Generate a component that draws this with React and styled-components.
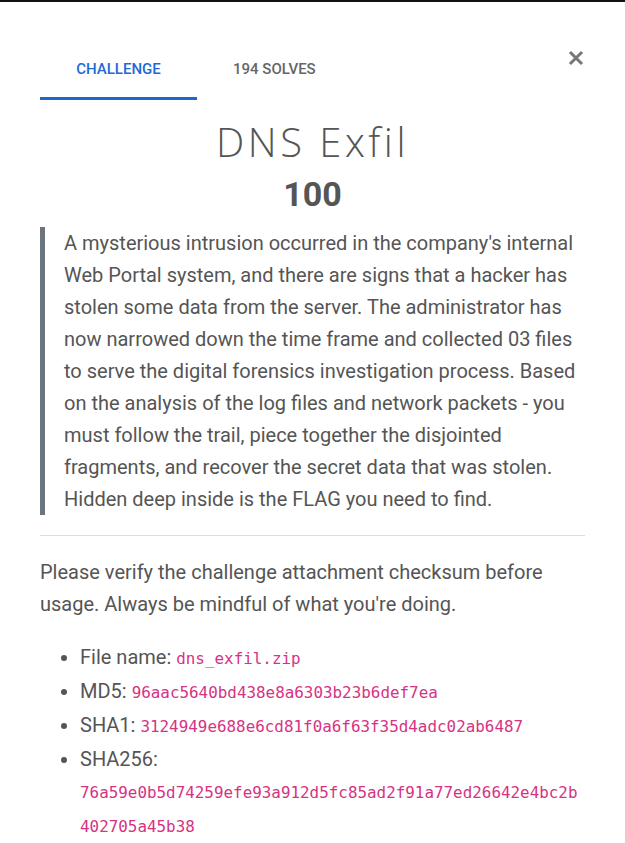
import styled, { createGlobalStyle } from "styled-components";

const GlobalStyle = createGlobalStyle`
  html, body {
    margin: 0;
    padding: 0;
    background: #fff;
  }
  body {
    font-family: Roboto, "Liberation Sans", sans-serif;
    color: #555;
  }
`;

const Modal = styled.div`
  border-top: 2px solid #111;
  padding: 36px 40px 20px;
  min-height: 843px;
  box-sizing: border-box;
`;

const Header = styled.div`
  display: flex;
  align-items: flex-start;
  justify-content: space-between;
`;

const Tabs = styled.nav`
  display: flex;
`;

const Tab = styled.div`
  width: ${(p) => (p.$active ? "157px" : "auto")};
  padding: 22px 36px 0;
  height: 62px;
  box-sizing: border-box;
  text-align: center;
  font-size: 15px;
  font-weight: 500;
  text-transform: uppercase;
  color: ${(p) => (p.$active ? "#1d6ad4" : "#666")};
  border-bottom: 3px solid ${(p) => (p.$active ? "#2067cc" : "transparent")};
`;

const Close = styled.button`
  background: none;
  border: none;
  padding: 0;
  margin: 12px 1px 0 0;
  color: #777;
  cursor: pointer;
  display: flex;
`;

const Title = styled.h2`
  margin: 18px 0 0;
  text-align: center;
  font-family: "Open Sans", sans-serif;
  font-weight: 300;
  font-size: 40px;
  letter-spacing: 3.5px;
  color: #555;
  line-height: 48px;
`;

const Points = styled.h3`
  margin: 3px 0 0;
  text-align: center;
  font-size: 34px;
  font-weight: 700;
  line-height: 50px;
  color: #555;
`;

const Quote = styled.blockquote`
  margin: 8px 0 0;
  padding: 0 0 0 19px;
  border-left: 5px solid #6c757d;
  font-size: 20px;
  line-height: 32px;
  color: #555;
`;

const Divider = styled.hr`
  border: none;
  border-top: 1px solid #ddd;
  margin: 20px 0 20px;
`;

const Note = styled.p`
  margin: 0 0 21px;
  font-size: 20px;
  line-height: 32px;
`;

const Files = styled.ul`
  margin: 0;
  padding-left: 40px;
  font-size: 20px;
  line-height: 32px;
`;

const Code = styled.code`
  font-family: "DejaVu Sans Mono", monospace;
  font-size: 15.9px;
  color: #d63384;
  overflow-wrap: break-word;
`;

const CloseIcon = () => (
  <svg width="16" height="16" viewBox="0 0 16 16">
    <path d="M3 3L13 13M13 3L3 13" stroke="currentColor" strokeWidth="3" strokeLinecap="square" />
  </svg>
);

const App = () => (
  <>
    <GlobalStyle />
    <Modal>
      <Header>
        <Tabs>
          <Tab $active>Challenge</Tab>
          <Tab>194 Solves</Tab>
        </Tabs>
        <Close aria-label="Close">
          <CloseIcon />
        </Close>
      </Header>
      <Title>DNS Exfil</Title>
      <Points>100</Points>
      <Quote>
        A mysterious intrusion occurred in the company's internal Web Portal system, and there are
        signs that a hacker has stolen some data from the server. The administrator has now
        narrowed down the time frame and collected 03 files to serve the digital forensics
        investigation process. Based on the analysis of the log files and network packets - you
        must follow the trail, piece together the disjointed fragments, and recover the secret data
        that was stolen. Hidden deep inside is the FLAG you need to find.
      </Quote>
      <Divider />
      <Note>
        Please verify the challenge attachment checksum before usage. Always be mindful of what
        you're doing.
      </Note>
      <Files>
        <li>
          File name: <Code>dns_exfil.zip</Code>
        </li>
        <li>
          MD5: <Code>96aac5640bd438e8a6303b23b6def7ea</Code>
        </li>
        <li>
          SHA1: <Code>3124949e688e6cd81f0a6f63f35d4adc02ab6487</Code>
        </li>
        <li>
          SHA256: <Code>76a59e0b5d74259efe93a912d5fc85ad2f91a77ed26642e4bc2b402705a45b38</Code>
        </li>
      </Files>
    </Modal>
  </>
);

export default App;
